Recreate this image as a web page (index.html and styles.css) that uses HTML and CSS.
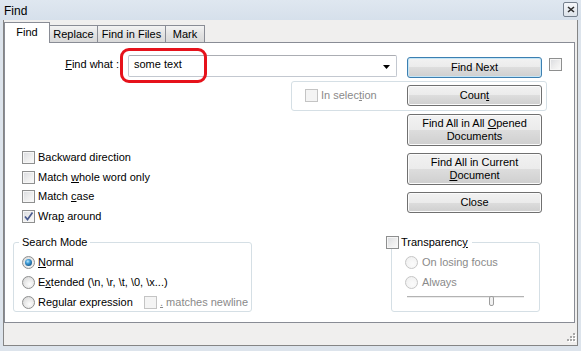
FILE: index.html
```html
<!DOCTYPE html>
<html>
<head>
<meta charset="utf-8">
<title>Find</title>
<link rel="stylesheet" href="styles.css">
</head>
<body>
<div class="window">
  <div class="titlebar">
    <span class="title">Find</span>
    <span class="close-btn">
      <svg width="8" height="7" viewBox="0 0 8 7"><path d="M1 1 L7 6 M7 1 L1 6" stroke="#2b2b2b" stroke-width="1.6" fill="none"/></svg>
    </span>
  </div>
  <div class="client">
    <div class="tabs">
      <div class="tab active">Find</div>
      <div class="tab t-replace">Replace</div>
      <div class="tab t-files">Find in Files</div>
      <div class="tab t-mark">Mark</div>
    </div>
    <div class="panel">
      <div class="row-find">
        <div class="find-label"><u>F</u>ind what :</div>
        <div class="combo">
          <span class="combo-text">some text</span>
          <svg class="combo-arrow" width="7" height="4" viewBox="0 0 7 4"><path d="M0 0 H7 L3.5 4 Z" fill="#000"/></svg>
        </div>
        <button class="btn default">Find Next</button>
        <span class="cb side-cb"></span>
      </div>
      <div class="sel-group">
        <div class="sel-check disabled"><span class="cb dis"></span><span>In selec<u>t</u>ion</span></div>
        <button class="btn">Coun<u>t</u></button>
      </div>
      <div class="middle">
        <div class="options">
          <div class="check"><span class="cb"></span><span>Backward direction</span></div>
          <div class="check"><span class="cb"></span><span>Match <u>w</u>hole word only</span></div>
          <div class="check"><span class="cb"></span><span>Match <u>c</u>ase</span></div>
          <div class="check"><span class="cb checked"><svg width="11" height="11" viewBox="0 0 11 11"><path d="M2 5.5 L4.5 8.5 L9.5 1.5" stroke="#4a5b8f" stroke-width="1.7" fill="none"/></svg></span><span>Wra<u>p</u> around</span></div>
        </div>
        <div class="actions">
          <button class="btn tall">Find All in All <u>O</u>pened<br>Documents</button>
          <button class="btn tall">Find All in Current<br><u>D</u>ocument</button>
          <button class="btn">Close</button>
        </div>
      </div>
      <div class="bottom">
        <fieldset class="group mode">
          <legend class="mode-legend">Search Mode</legend>
          <div class="radio"><span class="rb on"></span><span><u>N</u>ormal</span></div>
          <div class="radio"><span class="rb"></span><span>E<u>x</u>tended (\n, \r, \t, \0, \x...)</span></div>
          <div class="radio">
            <div class="regex"><span class="rb"></span><span>Re<u>g</u>ular expression</span></div>
            <span class="cb dis"></span><span class="disabled-text"><u>.</u> matches newline</span>
          </div>
        </fieldset>
        <fieldset class="group transp">
          <legend class="transp-legend"><span class="cb"></span><span class="legend-text">Transparenc<u>y</u></span></legend>
          <div class="radio disabled"><span class="rb dis"></span><span>On losing focus</span></div>
          <div class="radio disabled"><span class="rb dis"></span><span>Always</span></div>
          <div class="slider">
            <div class="track"></div>
            <div class="thumb"></div>
          </div>
        </fieldset>
      </div>
      <div class="annot"></div>
    </div>
    <div class="statusbar">
      <svg class="grip" width="11" height="11" viewBox="0 0 11 11">
        <g fill="#ffffff">
          <rect x="9" y="1" width="2" height="2"/>
          <rect x="6" y="4" width="2" height="2"/><rect x="9" y="4" width="2" height="2"/>
          <rect x="3" y="7" width="2" height="2"/><rect x="6" y="7" width="2" height="2"/><rect x="9" y="7" width="2" height="2"/>
        </g>
        <g fill="#a7a7a7">
          <rect x="8" y="0" width="2" height="2"/>
          <rect x="5" y="3" width="2" height="2"/><rect x="8" y="3" width="2" height="2"/>
          <rect x="2" y="6" width="2" height="2"/><rect x="5" y="6" width="2" height="2"/><rect x="8" y="6" width="2" height="2"/>
        </g>
      </svg>
    </div>
  </div>
</div>
</body>
</html>
```

FILE: styles.css
```css
* { box-sizing: border-box; }
html, body { margin: 0; padding: 0; }
body {
  width: 581px;
  height: 351px;
  overflow: hidden;
  background: #dde4ec;
  font-family: "Liberation Sans", Arial, sans-serif;
  font-size: 11px;
  color: #000;
}
u { text-decoration: underline; text-underline-offset: 1px; }

.window { display: flex; flex-direction: column; width: 581px; height: 351px; }

.titlebar {
  height: 20px;
  flex: none;
  display: flex;
  justify-content: space-between;
  align-items: flex-start;
  padding: 0 3px 0 4px;
  background: linear-gradient(#dfe7f0, #d6e0eb);
}
.title { font-size: 12px; line-height: 20px; padding-top: 1px; }
.close-btn {
  width: 15px;
  height: 15px;
  margin-top: 2px;
  border: 1px solid #75808d;
  border-radius: 2px;
  background: linear-gradient(#f5f7fa, #dde3ea);
  display: flex;
  align-items: center;
  justify-content: center;
}

.client {
  height: 326px;
  flex: none;
  margin: 0 3px;
  border: 1px solid #858585;
  border-top: none;
  background: #f0efee;
  display: flex;
  flex-direction: column;
}

/* tabs */
.tabs {
  height: 22px;
  flex: none;
  display: flex;
  align-items: flex-end;
  position: relative;
  z-index: 2;
}
.tab {
  height: 17px;
  border: 1px solid #898c95;
  border-left: none;
  border-bottom: none;
  background: linear-gradient(#f3f3f3, #e3e3e3 50%, #d9d9d9);
  line-height: 13px;
  padding-top: 2px;
  text-align: center;
}
.tab.active {
  width: 46px;
  height: 21px;
  margin-bottom: -1px;
  border-left: 1px solid #898c95;
  background: #fff;
  padding-top: 3px;
}
.t-replace { width: 48px; }
.t-files { width: 68px; }
.t-mark { width: 39px; }

/* main panel */
.panel {
  position: relative;
  width: 571px;
  height: 281px;
  flex: none;
  border: 1px solid #898c95;
  background: #fff;
  padding-top: 12px;
}

.row-find { display: flex; align-items: flex-start; height: 23px; }
.find-label { width: 114px; text-align: right; line-height: 13px; margin-top: 3px; }
.combo {
  width: 269px;
  height: 22px;
  margin-left: 9px;
  border: 1px solid #c3c8d0;
  border-top-color: #abadb3;
  border-radius: 2px;
  display: flex;
  align-items: flex-start;
  padding: 2px 6px 0 5px;
  line-height: 13px;
}
.combo-arrow { margin-left: auto; margin-top: 7px; }

.btn {
  font-family: inherit;
  font-size: 11px;
  color: #000;
  width: 135px;
  height: 21px;
  padding: 0;
  line-height: 13px;
  border: 1px solid #707070;
  border-radius: 3px;
  background: linear-gradient(#f2f2f2 0%, #ebebeb 50%, #dddddd 50%, #cfcfcf 100%);
  box-shadow: inset 0 0 0 1px #fbfbfb;
  flex: none;
}
.btn.tall { height: 32px; }
.btn.default {
  margin-left: 10px;
  margin-top: 2px;
  border-color: #3c7fb1;
  box-shadow: inset 0 0 0 1px #c4e5f6;
}
.side-cb { margin-left: 7px; margin-top: 3px; }

/* checkbox / radio */
.cb {
  display: inline-block;
  flex: none;
  width: 13px;
  height: 13px;
  border: 1px solid #8e8f8f;
  background: linear-gradient(135deg, #d9dbdf 0%, #eeeeee 55%, #fafafa 100%);
  box-shadow: inset 0 0 0 1px #f6f6f6;
}
.cb.dis {
  border-color: #c4c4c4;
  background: #f4f4f4;
  box-shadow: none;
}
.cb.checked { display: flex; align-items: center; justify-content: center; }
.rb {
  flex: none;
  width: 13px;
  height: 13px;
  border-radius: 50%;
  border: 1px solid #8e8f8f;
  background: radial-gradient(circle at 60% 65%, #fdfdfd 0%, #e8e8e8 50%, #d2d2d2 100%);
  display: flex;
  align-items: center;
  justify-content: center;
}
.rb.on::after {
  content: "";
  width: 7px;
  height: 7px;
  border-radius: 50%;
  background: radial-gradient(circle at 40% 35%, #b6e6fb 0%, #3d9ad6 35%, #1b5c8e 75%, #113f66 100%);
}
.rb.dis {
  border-color: #c6c6c6;
  background: radial-gradient(circle at 60% 65%, #fbfbfb 0%, #eeeeee 100%);
}
.disabled, .disabled-text { color: #8a8a8a; }
.disabled-text { white-space: nowrap; }

/* selection group */
.sel-group {
  margin-top: 3px;
  margin-left: 286px;
  width: 256px;
  height: 30px;
  border: 1px solid #d5dfe5;
  border-radius: 3px;
  display: flex;
  align-items: flex-start;
  padding: 3px 0 0 13px;
}
.sel-check {
  width: 102px;
  height: 20px;
  display: flex;
  align-items: center;
  gap: 3px;
  line-height: 13px;
}

/* middle */
.middle { display: flex; height: 125px; }
.options { width: 402px; padding: 37px 0 0 17px; }
.check { display: flex; align-items: center; gap: 3px; height: 19.6px; line-height: 13px; }
.actions { display: flex; flex-direction: column; gap: 7px; padding-top: 3px; }

/* bottom groups */
.bottom { display: flex; align-items: flex-start; }
.group {
  margin: 0;
  min-width: 0;
  height: 76px;
  border: 1px solid #d5dfe5;
  border-radius: 3px;
}
.mode { margin-left: 8px; width: 239px; padding: 3px 0 0 8px; }
.transp { margin-left: 139px; width: 149px; padding: 3px 0 0 13px; }
.mode-legend { padding: 0 3px; margin-left: -3px; line-height: 13px; }
.transp-legend { padding: 0 4px 0 0; margin-left: -19px; line-height: 13px; white-space: nowrap; }
.transp-legend .cb { vertical-align: top; }
.legend-text { margin-left: 2px; }

.radio { display: flex; align-items: center; gap: 3px; height: 20px; line-height: 13px; white-space: nowrap; }
.transp .radio { gap: 4px; }
.regex { width: 119px; display: flex; align-items: center; gap: 3px; }

.slider { position: relative; width: 117px; height: 10px; margin-left: 2px; margin-top: 1px; }
.track { margin-top: 4px; height: 2px; border-top: 1px solid #b3b3b3; border-bottom: 1px solid #ececec; }
.thumb {
  position: absolute;
  left: 82px;
  top: 0;
  width: 5px;
  height: 10px;
  border: 1px solid #9d9d9d;
  border-radius: 2px;
  background: #f2f2f2;
}

/* annotation */
.annot {
  position: absolute;
  left: 115px;
  top: 5px;
  width: 87px;
  height: 35px;
  border: 3px solid #e6121b;
  border-radius: 9px;
}

.statusbar {
  flex: 1;
  display: flex;
  justify-content: flex-end;
  align-items: flex-end;
  padding: 0 1px 1px 0;
}
```
